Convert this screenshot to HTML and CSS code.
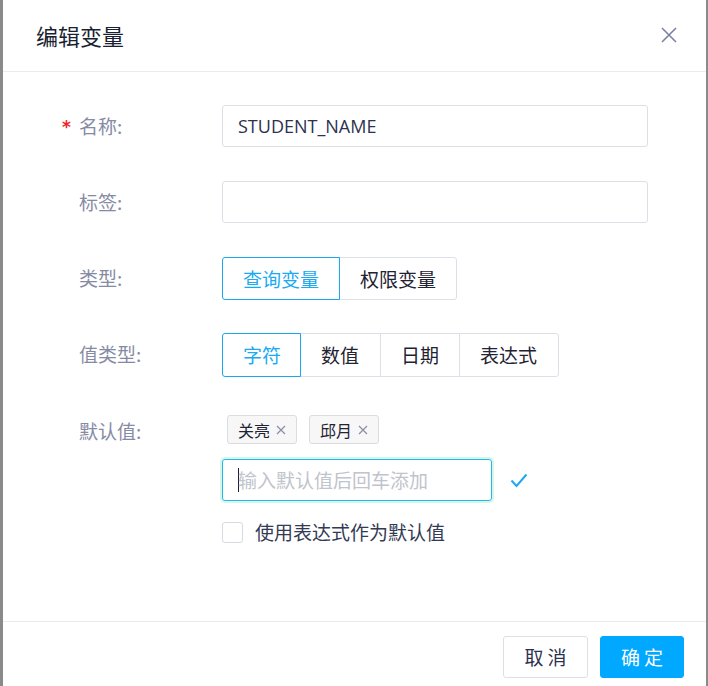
FILE: index.html
```html
<!DOCTYPE html>
<html lang="zh">
<head>
<meta charset="utf-8">
<link rel="stylesheet" href="styles.css">
</head>
<body>
<div class="dialog">
  <div class="header">
    <div class="title">编辑变量</div>
    <svg class="close" width="16" height="16" viewBox="0 0 16 16"><path d="M1 1 L15 15 M15 1 L1 15" stroke="#7c81a0" stroke-width="1.6" fill="none"/></svg>
  </div>
  <div class="body">
    <div class="row r1">
      <div class="label"><span class="req">*</span>名称:</div>
      <div class="input">STUDENT_NAME</div>
    </div>
    <div class="row r2">
      <div class="label">标签:</div>
      <div class="input"></div>
    </div>
    <div class="row r3">
      <div class="label">类型:</div>
      <div class="group">
        <div class="seg active">查询变量</div>
        <div class="seg">权限变量</div>
      </div>
    </div>
    <div class="row r4">
      <div class="label">值类型:</div>
      <div class="group">
        <div class="seg active">字符</div>
        <div class="seg">数值</div>
        <div class="seg">日期</div>
        <div class="seg">表达式</div>
      </div>
    </div>
    <div class="row r5">
      <div class="label short">默认值:</div>
      <div class="col">
        <div class="tags">
          <span class="tag">关亮<svg class="tx" width="10" height="10" viewBox="0 0 10 10"><path d="M1 1 L9 9 M9 1 L1 9" stroke="#8a8ea6" stroke-width="1.2" fill="none"/></svg></span>
          <span class="tag">邱月<svg class="tx" width="10" height="10" viewBox="0 0 10 10"><path d="M1 1 L9 9 M9 1 L1 9" stroke="#8a8ea6" stroke-width="1.2" fill="none"/></svg></span>
        </div>
        <div class="addrow">
          <div class="input focus"><span class="caret"></span><span class="ph">输入默认值后回车添加</span></div>
          <svg class="check" width="18" height="15" viewBox="0 0 18 15"><path d="M1.5 7.5 L6.5 13 L16.5 1.5" stroke="#1ea8f0" stroke-width="2" fill="none"/></svg>
        </div>
        <div class="cbrow">
          <span class="cb"></span>
          <span class="cblabel">使用表达式作为默认值</span>
        </div>
      </div>
    </div>
  </div>
  <div class="footer">
    <div class="btn">取消</div>
    <div class="btn primary">确定</div>
  </div>
</div>
</body>
</html>
```

FILE: styles.css
```css
html, body {
  margin: 0;
  padding: 0;
  background: #8a8a8a;
  font-family: "Noto Sans CJK SC", "Noto Sans", sans-serif;
}
.dialog {
  margin-left: 3px;
  width: 703px;
  height: 686px;
  background: #fff;
  display: flex;
  flex-direction: column;
}
.header {
  height: 71px;
  border-bottom: 1px solid #ececec;
  display: flex;
  align-items: center;
  justify-content: space-between;
  padding: 0 29px 0 33px;
  box-sizing: content-box;
}
.title {
  font-size: 22px;
  color: #1b1f33;
  line-height: 1;
  margin-top: -1px;
}
.close {
  display: block;
  margin-top: -1px;
}
.body {
  flex: 1;
  padding-top: 33px;
}
.row {
  display: flex;
  align-items: flex-start;
}
.r1, .r2 { margin-bottom: 34px; }
.r3 { margin-bottom: 33px; }
.r4 { margin-bottom: 38px; }
.label {
  width: 143px;
  padding-left: 76px;
  text-align: left;
  font-size: 19px;
  line-height: 42px;
  height: 42px;
  color: #868ba5;
  white-space: nowrap;
}
.label.short {
  line-height: 32px;
  height: 32px;
}
.req {
  display: inline-block;
  width: 17px;
  margin-left: -17px;
  color: #f5222d;
  font-family: "DejaVu Sans", sans-serif;
  font-weight: bold;
  font-size: 17px;
  line-height: 1;
  vertical-align: 1px;
}
.input {
  width: 424px;
  height: 40px;
  border: 1px solid #dcdfe6;
  border-radius: 3px;
  font-family: "Open Sans", "Noto Sans", sans-serif;
  font-size: 18px;
  line-height: 40px;
  padding-left: 15px;
  box-sizing: content-box;
  color: #2d3150;
}
.r1 .input, .r2 .input { width: 409px; }
.group {
  display: flex;
}
.seg {
  height: 41px;
  line-height: 41px;
  padding: 0 20px;
  border: 1px solid #dcdfe6;
  margin-left: -1px;
  font-size: 19px;
  color: #1f2333;
  background: #fff;
}
.seg:first-child {
  margin-left: 0;
  border-radius: 3px 0 0 3px;
}
.seg:last-child {
  border-radius: 0 3px 3px 0;
}
.seg.active {
  border-color: #1aa7ef;
  color: #1aaaf2;
  position: relative;
  z-index: 1;
}
.r4 .seg { height: 42px; line-height: 42px; }
.r4 .seg:nth-child(1) { padding: 0 19px 0 20px; }
.r4 .seg:nth-child(2) { padding: 0 21px 0 20px; }
.r4 .seg:nth-child(3) { padding: 0 20px 0 20px; }
.r4 .seg:nth-child(4) { padding: 0 21px 0 20px; }
.col {
  display: flex;
  flex-direction: column;
}
.tags {
  display: flex;
  gap: 12px;
  padding-left: 5px;
  height: 29px;
}
.tag {
  display: flex;
  align-items: center;
  height: 27px;
  border: 1px solid #dcdcdf;
  border-radius: 3px;
  background: #f7f7f8;
  padding: 0 10px 0 10px;
  font-size: 16px;
  color: #1f2333;
  width: 48px;
  justify-content: space-between;
}
.tx { display: block; }
.addrow {
  display: flex;
  align-items: center;
  margin-top: 15px;
}
.input.focus {
  width: 253px;
  border-color: #22b6f0;
  box-shadow: 0 0 0 2px #d2f8e6;
  display: flex;
  align-items: center;
  font-family: "Noto Sans CJK SC", sans-serif;
  font-size: 19px;
}
.caret {
  display: block;
  width: 1px;
  height: 24px;
  background: #1b1f3a;
  margin-right: -1px;
}
.ph {
  color: #c0c4cc;
}
.check {
  display: block;
  margin-left: 18px;
}
.cbrow {
  display: flex;
  align-items: center;
  margin-top: 20px;
}
.cb {
  display: block;
  width: 19px;
  height: 19px;
  border: 1px solid #d6d9e0;
  border-radius: 3px;
}
.cblabel {
  margin-left: 12px;
  font-size: 19px;
  color: #333a55;
  line-height: 22px;
}
.footer {
  border-top: 1px solid #ececec;
  display: flex;
  justify-content: flex-end;
  align-items: flex-start;
  padding: 14px 22px 0 0;
  box-sizing: border-box;
  height: 65px;
  gap: 12px;
}
.btn {
  width: 83px;
  height: 40px;
  border: 1px solid #dcdfe6;
  border-radius: 3px;
  text-align: center;
  line-height: 40px;
  font-size: 19px;
  letter-spacing: 4px;
  text-indent: 4px;
  color: #2d3150;
  background: #fff;
}
.btn.primary {
  width: 82px;
  background: #00a8ff;
  border-color: #00a8ff;
  color: #fff;
}
```
